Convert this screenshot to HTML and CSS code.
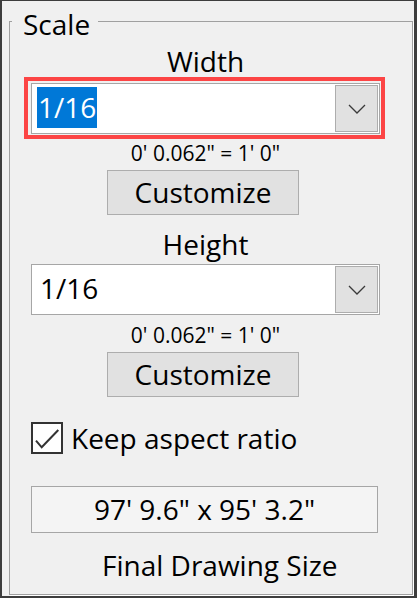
FILE: index.html
```html
<!DOCTYPE html>
<html lang="en">
<head>
<meta charset="utf-8">
<title>Scale</title>
<link rel="stylesheet" href="styles.css">
</head>
<body>
<div class="window">
  <fieldset class="group">
    <legend class="legend">Scale</legend>
    <div class="col">
      <div class="label label-width">Width</div>
      <div class="focus">
        <div class="combo">
          <div class="value value-focused"><span class="sel">1/16</span></div>
          <div class="drop">
            <svg class="chev" width="18" height="10" viewBox="0 0 18 10"><path d="M1 1 L9 9 L17 1" fill="none" stroke="#3a3a3a" stroke-width="1.3"/></svg>
          </div>
        </div>
      </div>
      <div class="ratio ratio-1">0' 0.062" = 1' 0"</div>
      <button class="btn btn-1" type="button">Customize</button>
      <div class="label label-height">Height</div>
      <div class="combo combo-height">
        <div class="value value-plain"><span class="txt">1/16</span></div>
        <div class="drop">
          <svg class="chev" width="18" height="10" viewBox="0 0 18 10"><path d="M1 1 L9 9 L17 1" fill="none" stroke="#3a3a3a" stroke-width="1.3"/></svg>
        </div>
      </div>
      <div class="ratio ratio-2">0' 0.062" = 1' 0"</div>
      <button class="btn btn-2" type="button">Customize</button>
      <label class="check-row">
        <span class="checkbox">
          <svg width="28" height="28" viewBox="0 0 28 28"><path d="M3 16.7 L8.7 23.3 L25.3 6" fill="none" stroke="#333" stroke-width="2"/></svg>
        </span>
        <span class="check-text">Keep aspect ratio</span>
      </label>
      <div class="size-box">97' 9.6" x 95' 3.2"</div>
      <div class="caption">Final Drawing Size</div>
    </div>
  </fieldset>
</div>
</body>
</html>
```

FILE: styles.css
```css
* { box-sizing: border-box; }

html, body {
  margin: 0;
  padding: 0;
  background: #f0f0f0;
}

body {
  font-family: "Open Sans", "Noto Sans", sans-serif;
  color: #000;
}

.window {
  width: 417px;
  height: 598px;
  background: #f0f0f0;
  border-style: solid;
  border-color: #3d3d3d;
  border-width: 1px 3px 2px 2px;
  overflow: hidden;
}

.group {
  margin: 0 1px 0 7px;
  padding: 0;
  min-width: 0;
  height: 594px;
  border: 1px solid #a0a0a0;
  box-shadow: 1px 1px 0 #ffffff;
}

.legend {
  margin-left: 2px;
  padding: 8px 8px 3px 11px;
  font-size: 28px;
  line-height: 30px;
}

.col {
  margin-left: 21px;
  width: 349px;
  display: flex;
  flex-direction: column;
}

.label {
  font-size: 28px;
  line-height: 30px;
  height: 30px;
  text-align: center;
}

.label-width { margin-top: 4px; }
.label-height { margin-top: 14px; }

.focus {
  margin-top: 1px;
  margin-left: -7px;
  width: 361px;
  border: 4px solid #fc4545;
  padding: 2px 1px 1px 3px;
}

.combo {
  width: 349px;
  height: 51px;
  border: 1px solid #a6a6a6;
  padding: 1px;
  background: #ffffff;
  display: flex;
}

.combo-height { margin-top: 5px; }

.value {
  flex: 1;
  padding-top: 2px;
  font-size: 28px;
}

.value-focused { padding-left: 4px; }
.value-plain { padding-left: 7px; }

.sel, .txt {
  display: inline-block;
  line-height: 41px;
  height: 41px;
}

.sel {
  background: #0078d7;
  color: #ffffff;
  padding: 0 1px;
}

.drop {
  width: 43px;
  border: 1px solid #adadad;
  background: #e1e1e1;
  display: flex;
  align-items: center;
  justify-content: center;
}

.chev { display: block; }

.ratio {
  font-size: 21px;
  line-height: 24px;
  height: 24px;
  text-align: center;
}

.ratio-1 { margin-top: 2px; }
.ratio-2 { margin-top: 8px; }

.btn {
  align-self: flex-start;
  margin: 5px 0 0 76px;
  width: 192px;
  height: 45px;
  padding: 0;
  border: 1px solid #adadad;
  background: #e1e1e1;
  color: #000;
  font-family: inherit;
  font-size: 28px;
  line-height: 43px;
}

.check-row {
  margin-top: 25px;
  height: 32px;
  display: flex;
  align-items: center;
  gap: 8px;
}

.checkbox {
  width: 32px;
  height: 32px;
  border: 2px solid #333333;
  background: #ffffff;
  display: block;
}

.checkbox svg { display: block; }

.check-text {
  font-size: 28px;
  line-height: 30px;
}

.size-box {
  margin-top: 32px;
  width: 347px;
  height: 47px;
  border: 1px solid #a6a6a6;
  background: #f4f4f4;
  font-size: 28px;
  line-height: 45px;
  text-align: center;
}

.caption {
  margin-top: 17px;
  padding-left: 71px;
  font-size: 28px;
  line-height: 30px;
}
```
